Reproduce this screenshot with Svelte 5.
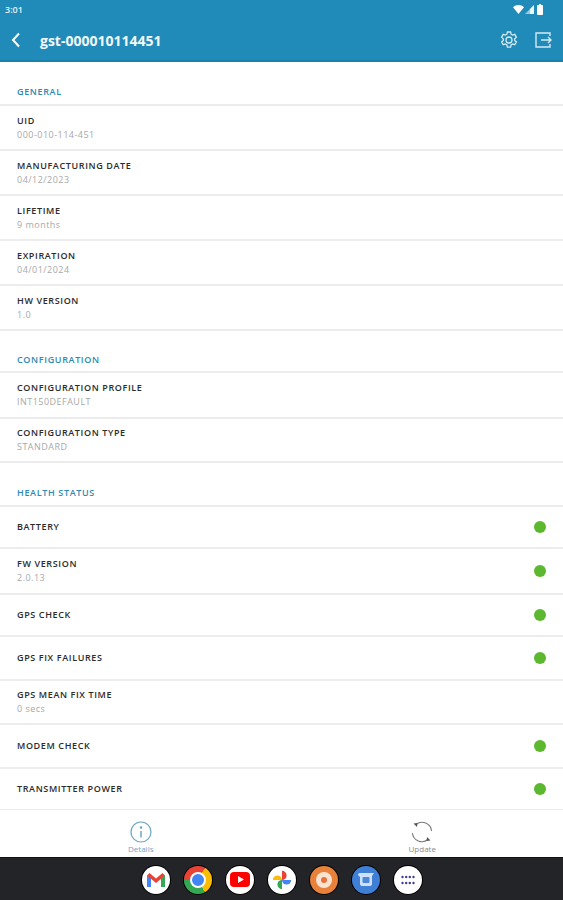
<script lang="ts">
  type Row = { label: string; value?: string; ok?: boolean; size?: string };

  const general: Row[] = [
    { label: 'UID', value: '000-010-114-451' },
    { label: 'Manufacturing date', value: '04/12/2023' },
    { label: 'Lifetime', value: '9 months' },
    { label: 'Expiration', value: '04/01/2024' },
    { label: 'HW version', value: '1.0' }
  ];

  const configuration: Row[] = [
    { label: 'Configuration profile', value: 'INT150DEFAULT', size: 'tall' },
    { label: 'Configuration type', value: 'STANDARD', size: 'mid' }
  ];

  const health: Row[] = [
    { label: 'Battery', ok: true, size: 'short' },
    { label: 'FW version', value: '2.0.13', ok: true, size: 'tall' },
    { label: 'GPS check', ok: true, size: 'short' },
    { label: 'GPS fix failures', ok: true, size: 'mid' },
    { label: 'GPS mean fix time', value: '0 secs', size: 'mid' },
    { label: 'Modem check', ok: true, size: 'mid' },
    { label: 'Transmitter power', ok: true, size: 'short' }
  ];

  const sections = [
    { title: 'General', rows: general },
    { title: 'Configuration', rows: configuration },
    { title: 'Health status', rows: health }
  ];
</script>

<div class="screen">
  <header class="appbar">
    <div class="status">
      <span class="time">3:01</span>
      <div class="status-icons">
        <svg width="11" height="9" viewBox="0 0 11 9"><path d="M0 2.2C3-.7 8-.7 11 2.2L5.5 9z" fill="#fff" /></svg>
        <svg class="signal" width="9" height="9" viewBox="0 0 9 9"><path d="M9 0v9H0z" fill="#fff" opacity="0.55" /><path d="M9 0v9H5V4z" fill="#fff" opacity="0.8" /></svg>
        <svg width="6" height="11" viewBox="0 0 6 11"><path d="M1 1h1V0h2v1h1a1 1 0 0 1 1 1v8a1 1 0 0 1-1 1H1a1 1 0 0 1-1-1V2a1 1 0 0 1 1-1z" fill="#fff" /></svg>
      </div>
    </div>
    <div class="toolbar">
      <svg class="back" width="10" height="16" viewBox="0 0 10 16"><path d="M8 1.5 2 8l6 6.5" fill="none" stroke="#fff" stroke-width="2" /></svg>
      <h1>gst-000010114451</h1>
      <div class="actions">
        <svg width="18" height="18" viewBox="0 0 18 18" fill="none" stroke="#d5e9f2" stroke-width="1.3">
          <path d="M7.4 1h3.2l.5 2.2 1.5.9 2.2-.7 1.6 2.8-1.7 1.5v1.7l1.7 1.5-1.6 2.8-2.2-.7-1.5.9-.5 2.2H7.4l-.5-2.2-1.5-.9-2.2.7-1.6-2.8 1.7-1.5V7.9L1.6 6.2l1.6-2.8 2.2.7 1.5-.9z" />
          <circle cx="9" cy="9" r="3" />
        </svg>
        <svg width="17" height="16" viewBox="0 0 17 16" fill="none" stroke="#d5e9f2" stroke-width="1.4">
          <path d="M15 4V1H1v14h14v-3" />
          <path d="M6 8h10M13 5l3 3-3 3" />
        </svg>
      </div>
    </div>
  </header>

  <main>
    {#each sections as section}
      <section>
        <h2>{section.title}</h2>
        {#each section.rows as row}
          <div class="row {row.size ?? ''}">
            <div class="text">
              <span class="label">{row.label}</span>
              {#if row.value}
                <span class="value">{row.value}</span>
              {/if}
            </div>
            {#if row.ok}
              <span class="dot"></span>
            {/if}
          </div>
        {/each}
      </section>
    {/each}
  </main>

  <nav class="tabs">
    <div class="tab active">
      <svg width="22" height="22" viewBox="0 0 22 22" fill="none" stroke="#6ea6c4" stroke-width="1.2">
        <circle cx="11" cy="11" r="10" />
        <circle cx="11" cy="6.5" r="0.7" fill="#6ea6c4" />
        <path d="M11 10v6.5" stroke-width="1.5" />
      </svg>
      <span>Details</span>
    </div>
    <div class="tab">
      <svg width="22" height="22" viewBox="0 0 22 22" fill="none" stroke="#7a7a7a" stroke-width="1.1">
        <path d="M5 3.5A9.6 9.6 0 0 1 20.6 10" />
        <path d="M17 18.5A9.6 9.6 0 0 1 1.4 12" />
        <path d="M2.5 2.5 6.5 2 6 6z" fill="#555" stroke="none" />
        <path d="M19.5 19.5 15.5 20 16 16z" fill="#555" stroke="none" />
      </svg>
      <span>Update</span>
    </div>
  </nav>

  <footer class="dock">
    <div class="app white">
      <svg width="20" height="16" viewBox="0 0 20 16">
        <path d="M1 3v12h4V6z" fill="#4285f4" />
        <path d="M15 6v9h4V3z" fill="#34a853" />
        <path d="M1 3.5 3.5 1 10 6.5 16.5 1 19 3.5 10 11z" fill="#ea4335" />
      </svg>
    </div>
    <div class="app chrome">
      <span class="chrome-eye"></span>
    </div>
    <div class="app white">
      <svg width="20" height="15" viewBox="0 0 20 15">
        <rect width="20" height="15" rx="4" fill="#f00" />
        <path d="M8 4v7l6-3.5z" fill="#fff" />
      </svg>
    </div>
    <div class="app white">
      <svg width="22" height="22" viewBox="0 0 24 24">
        <path d="M2 12a5 5 0 0 1 10 0z" fill="#fbbc04" />
        <path d="M12 2a5 5 0 0 1 0 10z" fill="#ea4335" />
        <path d="M22 12a5 5 0 0 1-10 0z" fill="#4285f4" />
        <path d="M12 22a5 5 0 0 1 0-10z" fill="#34a853" />
      </svg>
    </div>
    <div class="app orange">
      <span class="ring"><span></span></span>
    </div>
    <div class="app blue">
      <svg width="18" height="16" viewBox="0 0 18 16">
        <path d="M1 3a2 2 0 0 1 2-2h14l-2 3v8a2 2 0 0 1-2 2H5a2 2 0 0 1-2-2V5z" fill="#cfe0fb" />
        <rect x="5.5" y="5" width="7" height="6" rx="1" fill="#4f86d8" />
      </svg>
    </div>
    <div class="app white">
      <svg width="14" height="10" viewBox="0 0 14 10" fill="#3c4098">
        <circle cx="1.5" cy="2" r="1.2" /><circle cx="5.2" cy="2" r="1.2" /><circle cx="8.8" cy="2" r="1.2" /><circle cx="12.5" cy="2" r="1.2" />
        <circle cx="1.5" cy="8" r="1.2" /><circle cx="5.2" cy="8" r="1.2" /><circle cx="8.8" cy="8" r="1.2" /><circle cx="12.5" cy="8" r="1.2" />
      </svg>
    </div>
  </footer>
</div>

<style>
  :global(body) {
    background: #fff;
  }

  .screen {
    display: flex;
    flex-direction: column;
    width: 563px;
    height: 900px;
    overflow: hidden;
    font-family: 'Open Sans', sans-serif;
  }

  .appbar {
    height: 62px;
    flex: none;
    box-sizing: border-box;
    background: #208bb9;
    border-bottom: 2px solid #1a80ac;
    color: #fff;
  }

  .status {
    display: flex;
    align-items: center;
    justify-content: space-between;
    box-sizing: border-box;
    height: 20px;
    padding: 0 20px 2px 5px;
  }

  .time {
    font-size: 9px;
    font-weight: 600;
    color: #e6f2f7;
  }

  .status-icons {
    display: flex;
    align-items: center;
    gap: 3px;
  }

  .signal {
    margin-left: -2px;
  }

  .toolbar {
    display: flex;
    align-items: center;
    height: 40px;
    padding: 0 11px 0 11px;
  }

  .back {
    margin-right: 19px;
  }

  h1 {
    margin: 0;
    font-size: 14px;
    font-weight: 700;
    color: #f2f8fb;
  }

  .actions {
    display: flex;
    align-items: center;
    gap: 17px;
    margin-left: auto;
  }

  main {
    flex: 1;
    min-height: 0;
    padding-top: 19px;
  }

  h2 {
    height: 25px;
    margin: 0;
    padding-left: 17px;
    box-sizing: border-box;
    border-bottom: 2px solid #ececec;
    font-size: 9px;
    line-height: 22px;
    font-weight: 600;
    letter-spacing: 0.65px;
    text-transform: uppercase;
    color: #2d8ab4;
  }

  section + section {
    margin-top: 18px;
  }

  section + section h2 {
    height: 24px;
    line-height: 22px;
  }

  section:last-child {
    margin-top: 20px;
  }

  section:last-child h2 {
    line-height: 20px;
  }

  .row {
    display: flex;
    align-items: center;
    justify-content: space-between;
    box-sizing: border-box;
    height: 45px;
    padding: 0 17px;
    border-bottom: 2px solid #ececec;
  }

  .row.short {
    height: 42px;
  }

  .row.mid {
    height: 44px;
  }

  .row.tall {
    height: 46px;
  }

  .text {
    display: flex;
    flex-direction: column;
  }

  .label {
    font-size: 9px;
    line-height: 14px;
    font-weight: 600;
    letter-spacing: 0.62px;
    text-transform: uppercase;
    color: #2b2b2b;
  }

  .value {
    font-size: 9px;
    line-height: 14px;
    letter-spacing: 0.48px;
    color: #a8a8a8;
  }

  .dot {
    width: 12px;
    height: 12px;
    border-radius: 50%;
    background: #5cb82e;
  }

  .tabs {
    display: flex;
    flex: none;
    height: 48px;
    background: #fff;
    border-bottom: 1px solid #111;
    box-sizing: border-box;
  }

  .tab {
    display: flex;
    flex: 1;
    flex-direction: column;
    align-items: center;
    padding-top: 11px;
    font-size: 8px;
    line-height: 10px;
    color: #8a8a8a;
  }

  .tab.active {
    color: #6ea6c4;
  }

  .tab svg {
    margin-bottom: 1px;
  }

  .dock {
    display: flex;
    flex: none;
    align-items: center;
    justify-content: center;
    box-sizing: border-box;
    gap: 14px;
    height: 42px;
    padding-top: 1px;
    background: #232427;
  }

  .app {
    display: flex;
    align-items: center;
    justify-content: center;
    width: 28px;
    height: 28px;
    border-radius: 50%;
    box-shadow: 0 0 0 1px #000;
  }

  .white {
    background: #fff;
  }

  .chrome {
    background: conic-gradient(from 30deg, #fbbc04 0 120deg, #34a853 120deg 240deg, #ea4335 240deg 360deg);
  }

  .chrome-eye {
    width: 12px;
    height: 12px;
    border: 2px solid #fff;
    border-radius: 50%;
    background: #4285f4;
  }

  .orange {
    background: #e8813a;
  }

  .ring {
    display: flex;
    align-items: center;
    justify-content: center;
    width: 16px;
    height: 16px;
    border-radius: 50%;
    background: #fbe3d2;
  }

  .ring span {
    width: 6px;
    height: 6px;
    border-radius: 50%;
    background: #e8713a;
  }

  .blue {
    background: #3f7fd6;
  }
</style>
